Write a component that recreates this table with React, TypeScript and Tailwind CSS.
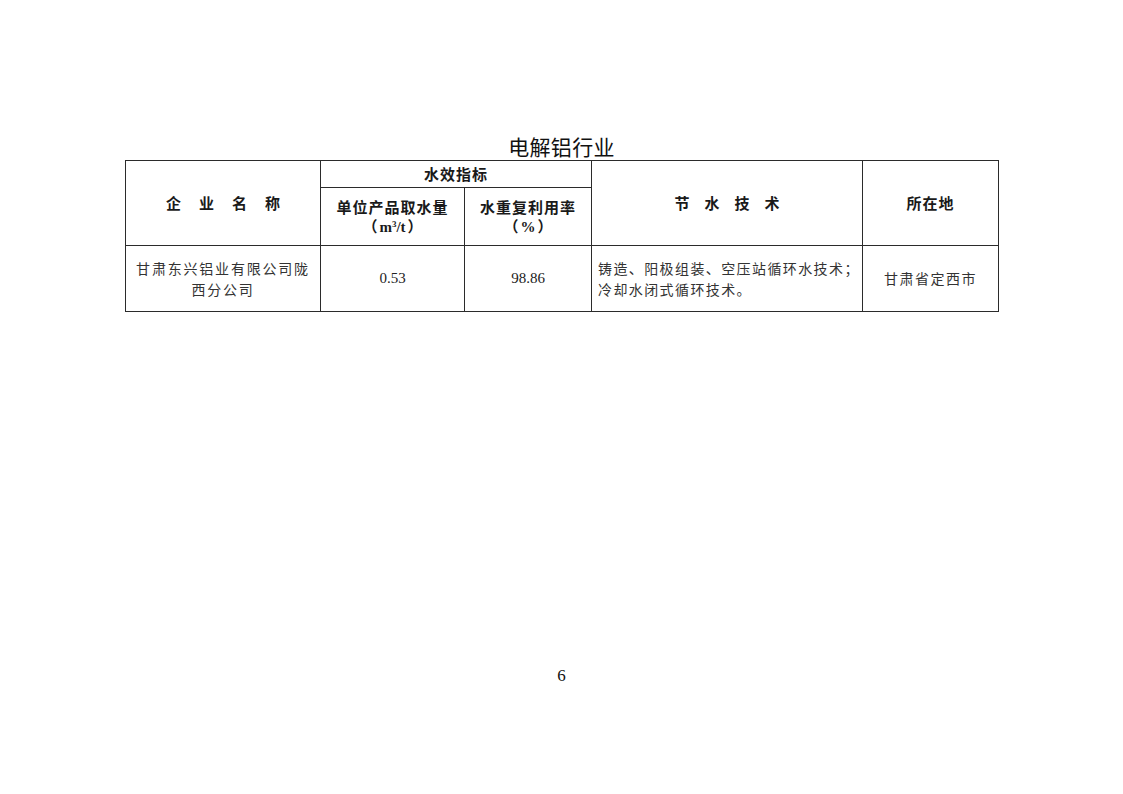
const CJK = "font-['Noto_Sans_CJK_SC','Noto_Sans',sans-serif]";
const SERIF = "font-['Liberation_Serif','Noto_Sans_CJK_SC',serif]";

const cell = "border border-[#2b2b2b] text-center align-middle p-0";

export default function App() {
  return (
    <div className="w-[1123px] h-[794px] bg-white flex flex-col items-center text-[#1a1a1a]">
      <div className="w-[873px] mt-[132px]">
        <h1 className={`${CJK} text-[21px] leading-[28px] text-center text-[#111] tracking-[0.3px]`}>
          电解铝行业
        </h1>
        <table className="w-[873px] table-fixed border-collapse">
          <colgroup>
            <col className="w-[195px]" />
            <col className="w-[144px]" />
            <col className="w-[127px]" />
            <col className="w-[271px]" />
            <col className="w-[136px]" />
          </colgroup>
          <thead>
            <tr className="h-[27px]">
              <th rowSpan={2} className={`${cell} ${CJK} text-[15px] font-bold tracking-[18px] pl-[18px]`}>
                企业名称
              </th>
              <th colSpan={2} className={`${cell} ${CJK} text-[15px] font-bold tracking-[1px] leading-[20px]`}>
                水效指标
              </th>
              <th rowSpan={2} className={`${cell} ${CJK} text-[15px] font-bold tracking-[15px] pl-[15px]`}>
                节水技术
              </th>
              <th rowSpan={2} className={`${cell} ${CJK} text-[15px] font-bold tracking-[1px]`}>
                所在地
              </th>
            </tr>
            <tr className="h-[58px]">
              <th className={`${cell} ${CJK} text-[15px] font-bold leading-[21px]`}>
                <div className="tracking-[1px]">单位产品取水量</div>
                <div className={`${SERIF} text-[15px]`}>
                  （<span className="px-[2px]">m<sup className="text-[9px]">3</sup>/t</span>）
                </div>
              </th>
              <th className={`${cell} ${CJK} text-[15px] font-bold leading-[21px]`}>
                <div className="tracking-[1px]">水重复利用率</div>
                <div className={`${SERIF} text-[15px]`}>
                  （<span className="px-[2px]">%</span>）
                </div>
              </th>
            </tr>
          </thead>
          <tbody>
            <tr className="h-[66px]">
              <td className={`${cell} ${CJK} text-[14px] leading-[21px] tracking-[1.8px] text-[#333] px-[8px]`}>
                甘肃东兴铝业有限公司陇<br />西分公司
              </td>
              <td className={`${cell} ${SERIF} text-[15px] text-[#222]`}>0.53</td>
              <td className={`${cell} ${SERIF} text-[15px] text-[#222]`}>98.86</td>
              <td className={`${cell} ${CJK} text-[14px] leading-[21px] tracking-[1.4px] text-[#333] text-left pl-[6px]`}>
                铸造、阳极组装、空压站循环水技术；<br />冷却水闭式循环技术。
              </td>
              <td className={`${cell} ${CJK} text-[14px] tracking-[1.5px] text-[#333]`}>
                甘肃省定西市
              </td>
            </tr>
          </tbody>
        </table>
      </div>
      <div className={`${SERIF} text-[17px] leading-[20px] mt-[354px] text-[#111]`}>6</div>
    </div>
  );
}
